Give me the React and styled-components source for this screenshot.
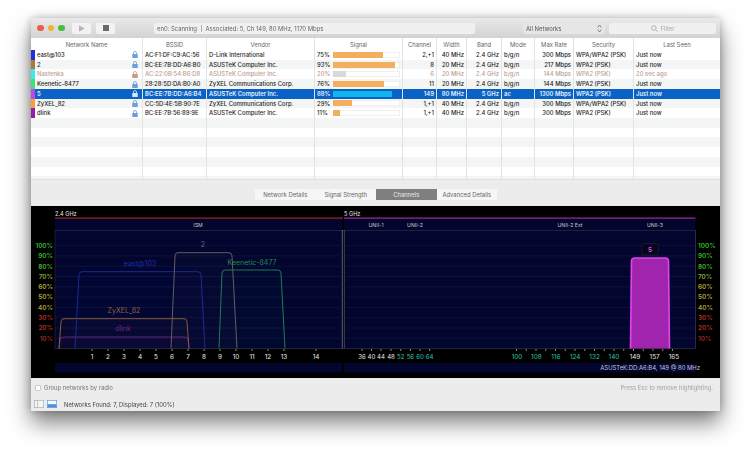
import React from 'react';
import styled, { createGlobalStyle } from 'styled-components';

const networks = [
  { name: 'east@103', chip: '#2233cc', bssid: 'AC:F1:DF:C9:AC:56', vendor: 'D-Link International', signal: 75, channel: '2,+1', width: '40 MHz', band: '2.4 GHz', mode: 'b/g/n', rate: '300 Mbps', security: 'WPA/WPA2 (PSK)', seen: 'Just now' },
  { name: '2', chip: '#a57a3c', bssid: 'BC:EE:7B:DD:A6:B0', vendor: 'ASUSTeK Computer Inc.', signal: 93, channel: '8', width: '20 MHz', band: '2.4 GHz', mode: 'b/g/n', rate: '217 Mbps', security: 'WPA2 (PSK)', seen: 'Just now' },
  { name: 'Nastenka', chip: '#45e6e6', bssid: 'AC:22:0B:54:B6:D8', vendor: 'ASUSTeK Computer Inc.', signal: 20, channel: '6', width: '20 MHz', band: '2.4 GHz', mode: 'b/g/n', rate: '144 Mbps', security: 'WPA2 (PSK)', seen: '20 sec ago', stale: true },
  { name: 'Keenetic-8477', chip: '#3fe07a', bssid: '28:28:5D:DA:B0:A0', vendor: 'ZyXEL Communications Corp.', signal: 76, channel: '11', width: '20 MHz', band: '2.4 GHz', mode: 'b/g/n', rate: '144 Mbps', security: 'WPA2 (PSK)', seen: 'Just now' },
  { name: '5', chip: '#c644e6', bssid: 'BC:EE:7B:DD:A6:B4', vendor: 'ASUSTeK Computer Inc.', signal: 88, channel: '149', width: '80 MHz', band: '5 GHz', mode: 'ac', rate: '1300 Mbps', security: 'WPA2 (PSK)', seen: 'Just now', selected: true },
  { name: 'ZyXEL_82', chip: '#f0a23c', bssid: 'CC:5D:4E:5B:90:7E', vendor: 'ZyXEL Communications Corp.', signal: 29, channel: '1,+1', width: '40 MHz', band: '2.4 GHz', mode: 'b/g/n', rate: '300 Mbps', security: 'WPA/WPA2 (PSK)', seen: 'Just now' },
  { name: 'dlink', chip: '#8a22a8', bssid: 'BC:EE:7B:56:89:9E', vendor: 'ASUSTeK Computer Inc.', signal: 11, channel: '1,+1', width: '40 MHz', band: '2.4 GHz', mode: 'b/g/n', rate: '300 Mbps', security: 'WPA2 (PSK)', seen: 'Just now' },
];

const columns = [
  ['Network Name'], ['BSSID'], ['Vendor'], ['Signal'], ['Channel'], ['Width'], ['Band'], ['Mode'], ['Max Rate'], ['Security'], ['Last Seen'],
];

const tabs = ['Network Details', 'Signal Strength', 'Channels', 'Advanced Details'];

const percentColors = {
  100: '#2fb82f', 90: '#2fb82f', 80: '#45b02f', 70: '#86a830', 60: '#b0a835', 50: '#b0a835', 40: '#a8a030', 30: '#b03025', 20: '#b03025', 10: '#982a20',
};
const percents = [100, 90, 80, 70, 60, 50, 40, 30, 20, 10];
const percentY = (p) => 348.6 - p * 1.03;

const low = [1, 2, 3, 4, 5, 6, 7, 8, 9, 10, 11, 12, 13].map((n) => [n, 92 + (n - 1) * 16]).concat([[14, 316]]);
const uni = [[36, 362], [40, 371.5], [44, 381], [48, 391], [52, 400.7], [56, 410.4], [60, 420], [64, 429.7]];
const high = [[100, 517], [108, 536.4], [116, 555.8], [124, 575.2], [132, 594.6], [140, 614], [149, 635], [157, 654.6], [165, 674]];
const highTicks = Array.from({ length: 17 }, (_, i) => 516.5 + i * 9.75);

const traces = [
  { label: 'dlink', color: '#6c2480', x: [59, 60, 188, 189], top: 337, lx: 123, ly: 331 },
  { label: 'ZyXEL_82', color: '#96683a', x: [59, 61, 187, 189], top: 318.7, lx: 124, ly: 313 },
  { label: 'east@103', color: '#1c2ea0', x: [75, 79, 201, 205], top: 271.7, lx: 140, ly: 265.5 },
  { label: '2', color: '#6e6864', x: [171, 175, 232, 237], top: 252.7, lx: 203, ly: 247 },
  { label: 'Keenetic-8477', color: '#25875a', x: [219, 222, 281, 285], top: 270, lx: 252, ly: 264.5 },
];

const tracePath = ({ x, top }) =>
  `M${x[0]} 348.6 L${x[1]} ${top + 3} Q${x[1] + 0.4} ${top} ${x[1] + 3} ${top} L${x[2] - 3} ${top} Q${x[2] - 0.4} ${top} ${x[2]} ${top + 3} L${x[3]} 348.6`;

const Lock = ({ color }) => (
  <svg width="6" height="7" viewBox="0 0 12 14">
    <path d="M3 6V4a3 3 0 0 1 6 0v2" fill="none" stroke={color} strokeWidth="1.6" />
    <rect x="0.5" y="6" width="11" height="8" rx="1" fill={color} />
  </svg>
);

const Chart = () => (
  <ChartSvg viewBox="31 206 689 172" width="689" height="172">
    <rect x="31" y="206" width="689" height="172" fill="#000" />
    <rect x="55" y="219" width="640.5" height="129.6" fill="#02052e" />
    <rect x="55" y="363" width="640.5" height="9.5" fill="#02052e" />
    <rect x="342" y="219" width="2" height="129.6" fill="#000" />
    <rect x="342" y="363" width="2" height="9.5" fill="#000" />

    <rect x="55" y="217.5" width="288" height="1.2" fill="#a5262c" />
    <rect x="344" y="217.5" width="351.5" height="1.2" fill="#a52c9c" />
    <ChartLabel x="55" y="216" fill="#e6e6e6" $size={5.6}>2.4 GHz</ChartLabel>
    <ChartLabel x="344" y="216" fill="#e6e6e6" $size={5.6}>5 GHz</ChartLabel>

    <ChartLabel x="198" y="227" fill="#c8c8d0" textAnchor="middle" $size={5.2}>ISM</ChartLabel>
    <ChartLabel x="376" y="227" fill="#c8c8d0" textAnchor="middle" $size={5.2}>UNII-1</ChartLabel>
    <ChartLabel x="415" y="227" fill="#c8c8d0" textAnchor="middle" $size={5.2}>UNII-2</ChartLabel>
    <ChartLabel x="570" y="227" fill="#c8c8d0" textAnchor="middle" $size={5.2}>UNII-2 Ext</ChartLabel>
    <ChartLabel x="655" y="227" fill="#c8c8d0" textAnchor="middle" $size={5.2}>UNII-3</ChartLabel>

    <line x1="55" y1="230.5" x2="695.5" y2="230.5" stroke="#33364f" strokeWidth="0.6" />
    <line x1="55" y1="230" x2="55" y2="348.6" stroke="#33364f" strokeWidth="0.5" />
    <line x1="695.5" y1="230" x2="695.5" y2="348.6" stroke="#44465a" strokeWidth="0.6" />
    <line x1="342.3" y1="230" x2="342.3" y2="348.6" stroke="#8a8a92" strokeWidth="0.7" />
    <line x1="344.3" y1="230" x2="344.3" y2="348.6" stroke="#6a6a78" strokeWidth="0.6" />
    <line x1="55" y1="348.6" x2="695.5" y2="348.6" stroke="#3a3c52" strokeWidth="0.6" />

    {percents.map((p) => (
      <g key={p}>
        <line x1="55" y1={percentY(p)} x2="695.5" y2={percentY(p)} stroke="#1c1f4c" strokeWidth="0.5" />
        <ChartLabel x="53" y={percentY(p) + 2.3} fill={percentColors[p]} textAnchor="end" $bold>{p}%</ChartLabel>
        <ChartLabel x="698" y={percentY(p) + 2.3} fill={percentColors[p]} $bold>{p}%</ChartLabel>
      </g>
    ))}

    {traces.map((t) => (
      <g key={t.label}>
        <path d={tracePath(t)} fill={t.color} fillOpacity="0.04" stroke={t.color} strokeWidth="0.9" />
        <ChartLabel x={t.lx} y={t.ly} fill={t.color} textAnchor="middle" $size={7}>{t.label}</ChartLabel>
      </g>
    ))}

    <path d="M630.5 348.6 L631.5 261 Q631.5 258 635 258 L665 258 Q668.5 258 668.5 261 L669.5 348.6 Z" fill="#a024ae" />
    <path d="M630.5 348.6 L631.5 261 Q631.5 258 635 258 L665 258 Q668.5 258 668.5 261 L669.5 348.6" fill="none" stroke="#e344ee" strokeWidth="1.6" />
    <rect x="641.8" y="243.5" width="16.4" height="11.5" rx="1.5" fill="#05051c" stroke="#2c2c40" strokeWidth="0.5" />
    <ChartLabel x="650" y="251.6" fill="#ee4cf0" textAnchor="middle" $bold>5</ChartLabel>

    {low.map(([n, x]) => (
      <g key={n}>
        <line x1={x} y1="349" x2={x} y2="351" stroke="#ddd" strokeWidth="0.6" />
        <ChartLabel x={x} y="359" fill="#ececec" textAnchor="middle">{n}</ChartLabel>
      </g>
    ))}
    {uni.map(([n, x]) => (
      <g key={n}>
        <line x1={x} y1="349" x2={x} y2="351" stroke="#ddd" strokeWidth="0.6" />
        <ChartLabel x={x} y="359" fill={n >= 52 ? '#2cc4b2' : '#e4e4e4'} textAnchor="middle" $size={6.1}>{n}</ChartLabel>
      </g>
    ))}
    {highTicks.map((x) => (
      <line key={x} x1={x} y1="349" x2={x} y2="351" stroke="#ddd" strokeWidth="0.6" />
    ))}
    {high.map(([n, x]) => (
      <ChartLabel key={n} x={x} y="359" fill={n <= 140 ? '#2cc4b2' : '#e4e4e4'} textAnchor="middle">{n}</ChartLabel>
    ))}

    <ChartLabel x="700" y="370" fill="#c4c8dc" textAnchor="end" $size={5.9}>ASUSTeK:DD:A6:B4, 149 @ 80 MHz</ChartLabel>
  </ChartSvg>
);

export default function App() {
  const rows = [...networks, ...Array.from({ length: 7 }, () => null)];
  return (
    <>
      <GlobalStyle />
      <Page>
        <Window>
          <TitleBar>
            <Lights>
              <Light $color="#ee5a52" />
              <Light $color="#f0b530" />
              <Light $color="#45c03e" />
            </Lights>
            <ToolButton>
              <svg width="7" height="7" viewBox="0 0 10 10"><path d="M1.5 0.5 L9.5 5 L1.5 9.5 Z" fill="#b4b4b4" /></svg>
            </ToolButton>
            <ToolButton>
              <svg width="6" height="6" viewBox="0 0 10 10"><rect width="10" height="10" fill="#6a6a6a" /></svg>
            </ToolButton>
            <StatusField>en0: Scanning &nbsp;|&nbsp; Associated: 5, Ch 149, 80 MHz, 1170 Mbps</StatusField>
            <SelectField>
              <span>All Networks</span>
              <svg width="5" height="9" viewBox="0 0 10 18">
                <path d="M1.5 7 L5 2 L8.5 7 M1.5 11 L5 16 L8.5 11" fill="none" stroke="#666" strokeWidth="1.5" />
              </svg>
            </SelectField>
            <FilterField>
              <svg width="7" height="7" viewBox="0 0 12 12">
                <circle cx="5" cy="5" r="3.8" fill="none" stroke="#999" strokeWidth="1.2" />
                <path d="M8 8 L11.5 11.5" stroke="#999" strokeWidth="1.2" />
              </svg>
              <span>Filter</span>
            </FilterField>
          </TitleBar>

          <Table>
            <HeadRow>
              {columns.map(([title]) => <HeadCell key={title}>{title}</HeadCell>)}
            </HeadRow>
            {rows.map((n, i) => n ? (
              <Row key={n.name} $odd={i % 2 === 1} $selected={n.selected} $stale={n.stale}>
                <NameCell $selected={n.selected}>
                  <Chip $color={n.chip} />
                  <span>{n.name}</span>
                  <LockSlot>
                    <Lock color={n.selected ? '#d6e6fa' : n.stale ? '#c99a86' : '#6f9fd8'} />
                  </LockSlot>
                </NameCell>
                <Cell>{n.bssid}</Cell>
                <Cell>{n.vendor}</Cell>
                <Cell>
                  <SignalText>{n.signal}%</SignalText>
                  <Track $selected={n.selected}>
                    <Fill style={{ width: `${n.signal}%` }} $selected={n.selected} $stale={n.stale} />
                  </Track>
                </Cell>
                <Cell $right>{n.channel}</Cell>
                <Cell $right>{n.width}</Cell>
                <Cell $right>{n.band}</Cell>
                <Cell>{n.mode}</Cell>
                <Cell $right>{n.rate}</Cell>
                <Cell>{n.security}</Cell>
                <Cell>{n.seen}</Cell>
              </Row>
            ) : (
              <Row key={i} $odd={i % 2 === 1}>
                {columns.map(([title]) => <Cell key={title} />)}
              </Row>
            ))}
          </Table>

          <TabBar>
            {tabs.map((t) => <Tab key={t} $active={t === 'Channels'}>{t}</Tab>)}
          </TabBar>

          <Chart />

          <Footer>
            <FooterRow>
              <CheckLabel>
                <CheckBox />
                Group networks by radio
              </CheckLabel>
              <Hint>Press Esc to remove highlighting.</Hint>
            </FooterRow>
            <StatusRow>
              <svg width="10" height="8" viewBox="0 0 10 8">
                <rect x="0.3" y="0.3" width="9.4" height="7.4" fill="#f4f4f4" stroke="#a8a8a8" strokeWidth="0.6" />
                <line x1="3.5" y1="0.3" x2="3.5" y2="7.7" stroke="#a8a8a8" strokeWidth="0.6" />
              </svg>
              <svg width="10" height="8" viewBox="0 0 10 8">
                <rect x="0.3" y="0.3" width="9.4" height="7.4" fill="#f4f8fd" stroke="#4f8fd8" strokeWidth="0.6" />
                <rect x="0.6" y="4.2" width="8.8" height="3.2" fill="#4f8fd8" />
              </svg>
              <StatusText>Networks Found: 7, Displayed: 7 (100%)</StatusText>
            </StatusRow>
          </Footer>
        </Window>
      </Page>
    </>
  );
}

const GlobalStyle = createGlobalStyle`
  html, body {
    margin: 0;
    padding: 0;
    background: #fff;
    overflow: hidden;
  }
  * {
    box-sizing: border-box;
  }
`;

const Page = styled.div`
  width: 750px;
  height: 454px;
  padding: 18px 30px 0 31px;
  font-family: Inter, "Liberation Sans", sans-serif;
  font-size: 5.9px;
  color: #333;
`;

const Window = styled.div`
  width: 689px;
  height: 393px;
  display: flex;
  flex-direction: column;
  background: #ececec;
  border-radius: 3px 3px 0 0;
  box-shadow: 0 12px 22px rgba(0, 0, 0, 0.5), 0 0 9px rgba(0, 0, 0, 0.25);
  filter: blur(0.45px);
  overflow: hidden;
`;

const TitleBar = styled.div`
  height: 20px;
  flex: none;
  display: flex;
  align-items: center;
  padding: 0 4px 0 6px;
  background: linear-gradient(#e9e9e9, #d3d3d3);
`;

const Lights = styled.div`
  display: flex;
  gap: 4px;
  margin-right: 7.5px;
`;

const Light = styled.div`
  width: 6.5px;
  height: 6.5px;
  border-radius: 50%;
  background: ${(p) => p.$color};
`;

const ToolButton = styled.div`
  width: 19px;
  height: 11px;
  margin-right: 5px;
  display: flex;
  align-items: center;
  justify-content: center;
  background: #f2f2f2;
  border-radius: 2px;
`;

const StatusField = styled.div`
  width: 321px;
  height: 11px;
  margin-left: 34px;
  padding-left: 3px;
  display: flex;
  align-items: center;
  background: #f0f0f0;
  border-radius: 2px;
  color: #666;
  white-space: pre;
`;

const SelectField = styled.div`
  width: 82px;
  height: 11px;
  margin-left: 48px;
  padding: 0 3px;
  display: flex;
  align-items: center;
  justify-content: space-between;
  background: #e6e6e6;
  border-radius: 2px;
  color: #555;
`;

const FilterField = styled.div`
  width: 107px;
  height: 11px;
  margin-left: 4px;
  display: flex;
  align-items: center;
  justify-content: center;
  gap: 3px;
  background: #f0f0f0;
  border-radius: 2px;
  color: #aaa;
`;

const Table = styled.div`
  height: 142px;
  flex: none;
  overflow: hidden;
  background: #fff;
  border-bottom: 1px solid #e0e0e0;
`;

const grid = `
  display: grid;
  grid-template-columns: 112px 64px 108px 88px 34px 30px 35px 33px 39px 60px 86px;
`;

const HeadRow = styled.div`
  ${grid}
  height: 12px;
  background: #fff;
`;

const HeadCell = styled.div`
  display: flex;
  align-items: center;
  justify-content: center;
  border-right: 1px solid #e2e2e2;
  color: #666;
  &:last-child {
    border-right: none;
  }
`;

const Row = styled.div`
  ${grid}
  height: 9.72px;
  line-height: 9.72px;
  background: ${(p) => (p.$selected ? '#0a62c6' : p.$odd ? '#f4f5f5' : '#fff')};
  color: ${(p) => (p.$selected ? '#e8f1fc' : p.$stale ? '#bd9d92' : '#1f1f1f')};
  font-weight: ${(p) => (p.$selected ? 600 : 500)};
`;

const Cell = styled.div`
  display: flex;
  align-items: center;
  justify-content: ${(p) => (p.$right ? 'flex-end' : 'flex-start')};
  padding: 0 2px;
  border-right: 1px solid #e2e4e4;
  white-space: nowrap;
  overflow: hidden;
  &:last-child {
    border-right: none;
  }
`;

const NameCell = styled(Cell)`
  padding: 0 3px 0 0;
`;

const Chip = styled.div`
  width: 3.5px;
  height: 100%;
  margin-right: 2.5px;
  background: ${(p) => p.$color};
  flex: none;
`;

const LockSlot = styled.div`
  margin-left: auto;
  padding-right: 1.5px;
  display: flex;
`;

const SignalText = styled.span`
  width: 16px;
  flex: none;
`;

const Track = styled.div`
  width: 67px;
  height: 6px;
  background: ${(p) => (p.$selected ? '#0a62c6' : '#fff')};
  box-shadow: ${(p) => (p.$selected ? 'none' : 'inset 0 0 0 0.5px #e2e2dc')};
`;

const Fill = styled.div`
  height: 100%;
  background: ${(p) => (p.$selected ? '#12b4ee' : p.$stale ? '#d9d9d9' : '#f3ae5e')};
`;

const TabBar = styled.div`
  height: 26px;
  flex: none;
  display: flex;
  align-items: center;
  justify-content: flex-start;
  padding: 2px 0 0 224px;
`;

const Tab = styled.div`
  width: 60.5px;
  height: 11px;
  display: flex;
  align-items: center;
  justify-content: center;
  background: ${(p) => (p.$active ? '#7f7f7f' : '#f6f6f6')};
  color: ${(p) => (p.$active ? '#e8e8e8' : '#666')};
`;

const ChartSvg = styled.svg`
  display: block;
  flex: none;
`;

const ChartLabel = styled.text`
  font-family: Inter, "Liberation Sans", sans-serif;
  font-size: ${(p) => p.$size || 6.4}px;
  font-weight: ${(p) => (p.$bold ? 600 : 400)};
`;

const Footer = styled.div`
  flex: 1;
  display: flex;
  flex-direction: column;
`;

const FooterRow = styled.div`
  height: 19px;
  display: flex;
  align-items: center;
  justify-content: space-between;
  padding: 0 7px 0 4px;
  color: #777;
`;

const CheckLabel = styled.label`
  display: flex;
  align-items: center;
  gap: 3px;
`;

const CheckBox = styled.span`
  width: 6px;
  height: 6px;
  background: #fff;
  border: 0.5px solid #ccc;
  border-radius: 1px;
`;

const Hint = styled.span`
  color: #a2a2a2;
`;

const StatusRow = styled.div`
  flex: 1;
  display: flex;
  align-items: center;
  gap: 3px;
  padding-left: 3px;
`;

const StatusText = styled.span`
  margin-left: 4px;
  color: #444;
`;
